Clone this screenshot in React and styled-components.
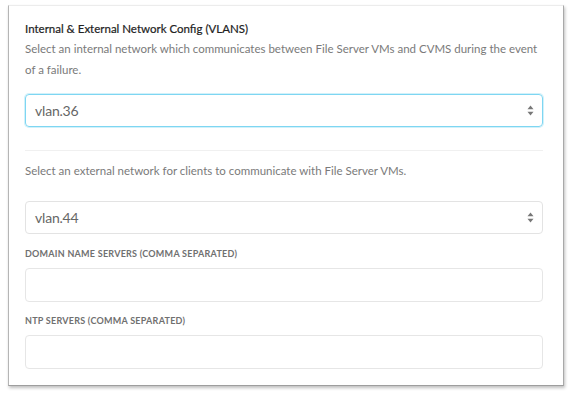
import React from "react";
import styled, { createGlobalStyle } from "styled-components";

const Global = createGlobalStyle`
  html, body { margin: 0; padding: 0; background: #fff; }
  body { font-family: Lato, "Open Sans", sans-serif; }
  * { box-sizing: border-box; }
`;

const Page = styled.div`
  padding: 5px 9px 0 8px;
  width: 573px;
  height: 398px;
`;

const Card = styled.div`
  width: 556px;
  height: 381px;
  background: #fff;
  border: 1px solid #ececec;
  border-left-color: #b5b5b5;
  border-right-color: #a9a9a9;
  border-bottom-color: #9e9e9e;
  box-shadow: 1px 2px 3px rgba(0, 0, 0, 0.25);
  padding: 16px 20px 0 16px;
  display: flex;
  flex-direction: column;
`;

const Title = styled.div`
  font-size: 11.5px;
  font-weight: 400;
  color: #222;
  line-height: 14px;
  -webkit-text-stroke: 0.2px #222;
`;

const Desc = styled.p`
  margin: ${(p) => p.$mt || 0}px 0 0;
  font-size: 11.5px;
  line-height: 21px;
  color: #7a7a7a;
`;

const SelectBox = styled.div`
  margin-top: ${(p) => p.$mt || 0}px;
  height: 33px;
  border: 1px solid ${(p) => (p.$focus ? "#7ed6f2" : "#e3e3e3")};
  box-shadow: ${(p) => (p.$focus ? "0 0 0 1px rgba(126,214,242,0.35)" : "none")};
  border-radius: 4px;
  display: flex;
  align-items: center;
  justify-content: space-between;
  padding: 0 8px 0 9px;
  font-size: 14px;
  letter-spacing: -0.2px;
  color: #666;
`;

const Arrows = styled.svg`
  width: 7px;
  height: 11px;
`;

const Divider = styled.div`
  margin-top: 23px;
  height: 1px;
  background: #f0f0f0;
`;

const Label = styled.div`
  margin-top: ${(p) => p.$mt}px;
  font-size: 9px;
  font-weight: 700;
  letter-spacing: 0.25px;
  color: #707070;
  text-transform: uppercase;
  line-height: 10px;
`;

const Input = styled.div`
  margin-top: 9px;
  height: 34px;
  border: 1px solid #e6e6e6;
  border-radius: 4px;
`;

function Select({ value, focus, mt }) {
  return (
    <SelectBox $focus={focus} $mt={mt}>
      <span>{value}</span>
      <Arrows viewBox="0 0 7 11">
        <path d="M3.5 0.5 L6.5 4.2 H0.5 Z" fill="#777" />
        <path d="M3.5 10.5 L6.5 6.8 H0.5 Z" fill="#777" />
      </Arrows>
    </SelectBox>
  );
}

export default function App() {
  return (
    <>
      <Global />
      <Page>
        <Card>
          <Title>Internal &amp; External Network Config (VLANS)</Title>
          <Desc $mt={2}>
            Select an internal network which communicates between File Server VMs and CVMS during the event
            of a failure.
          </Desc>
          <Select value="vlan.36" focus mt={14} />
          <Divider />
          <Desc $mt={9}>Select an external network for clients to communicate with File Server VMs.</Desc>
          <Select value="vlan.44" mt={20} />
          <Label $mt={15}>Domain Name Servers (Comma Separated)</Label>
          <Input />
          <Label $mt={14}>NTP Servers (Comma Separated)</Label>
          <Input />
        </Card>
      </Page>
    </>
  );
}
